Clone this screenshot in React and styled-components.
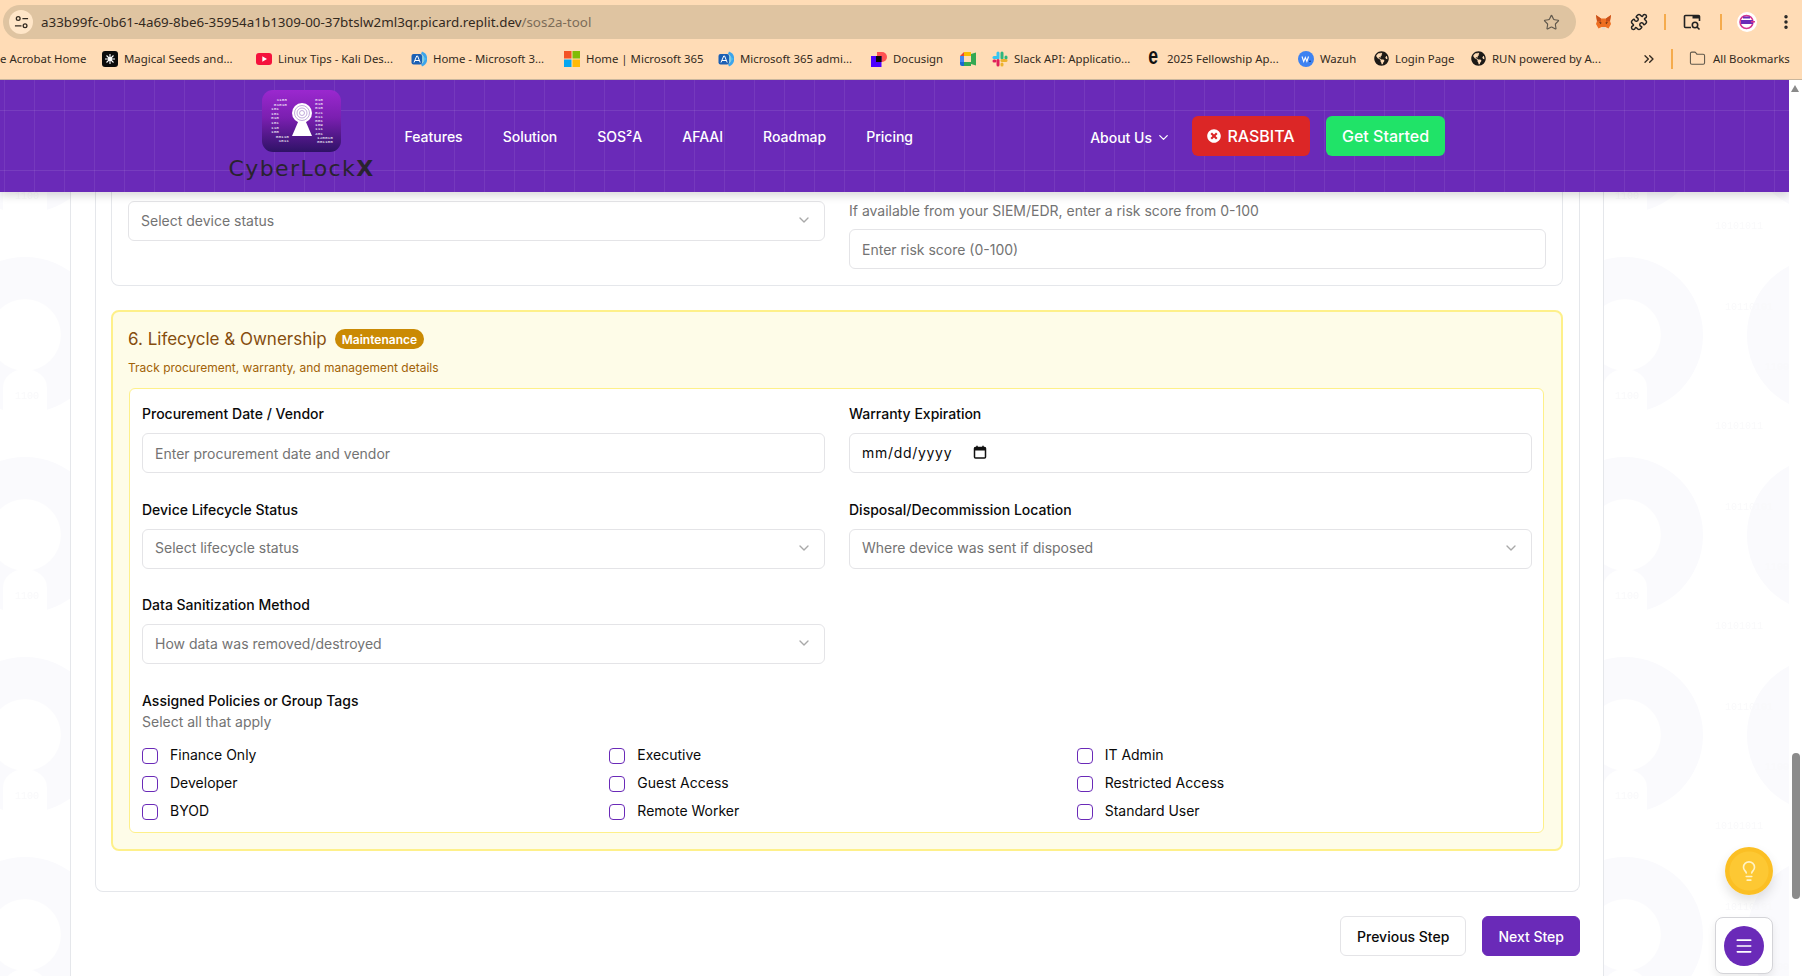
import React from 'react';
import styled, { createGlobalStyle } from 'styled-components';
import { ChevronDown, ChevronsRight, Folder, Lightbulb, Menu, MoreVertical, Puzzle, Star } from 'lucide-react';
import { FaGlobeAmericas, FaTimesCircle } from 'react-icons/fa';

const purple = '#6a2ab8';

const Global = createGlobalStyle`
  * { box-sizing: border-box; }
  html, body { margin: 0; padding: 0; height: 976px; overflow: hidden; background: #fff; }
  body { font-family: Inter, "Liberation Sans", sans-serif; color: #0a0a0a; }
`;

const Shell = styled.div`display: flex; flex-direction: column; width: 1802px; height: 976px; overflow: hidden;`;

/* browser chrome */
const Chrome = styled.div`
  height: 80px; flex: none; background: #ffdcb6; border-bottom: 1px solid #c9b69d;
  font-family: "Noto Sans", "Liberation Sans", sans-serif; color: #332a20;
`;
const Toolbar = styled.div`display: flex; align-items: flex-start; height: 41px; padding: 5px 0 0 3px;`;
const AddressBar = styled.div`
  display: flex; align-items: center; width: 1573px; height: 34px; border-radius: 17px; background: #dfc4a1; padding: 0 16px 0 6px;
`;
const SiteChip = styled.span`
  display: flex; align-items: center; justify-content: center; width: 24px; height: 24px; border-radius: 50%; background: #ffe6c8; margin-right: 8px; flex: none;
`;
const Url = styled.span`font-size: 13.4px; letter-spacing: 0; flex: 1; white-space: nowrap; color: #33291e;`;
const UrlPath = styled.span`color: #7c6c58;`;
const ToolIcons = styled.div`display: flex; align-items: center; height: 34px; margin-left: 17px;`;
const ToolSlot = styled.span`display: flex; align-items: center; justify-content: center; width: ${p => p.$w}px; height: 24px;`;
const ToolSep = styled.span`display: block; width: 2px; height: 16px; background: #f5ab4d;`;
const BookmarkBar = styled.div`display: flex; align-items: center; height: 35px; font-size: 11.4px; white-space: nowrap; overflow: hidden; position: relative;`;
const BookmarkItem = styled.span`
  display: flex; align-items: center; gap: 6px; flex: none; width: ${p => p.$w}px; color: #332a20;
`;
const AllBookmarks = styled(BookmarkItem)`margin-left: 7px;`;
const IconBox = styled.span`display: flex; width: 16px; height: 16px; align-items: center; justify-content: center; flex: none;`;
const ELetter = styled.span`font: 700 22px "Liberation Sans", sans-serif; color: #111; line-height: 16px; transform: scale(.8, 1.05); margin-top: -3px;`;
const LeadCut = styled.span`flex: none; width: 102px; margin-left: 0; color: #332a20;`;
const OverflowBtn = styled.span`display: flex; width: 22px; justify-content: center; margin-left: 31px; flex: none;`;
const BarSep = styled.span`display: block; width: 2px; height: 20px; background: #f5ab4d; margin: 0 16px 0 11px; flex: none;`;

/* viewport */
const Viewport = styled.div`display: flex; flex: 1; min-height: 0;`;
const Page = styled.div`flex: 1; position: relative; overflow: hidden; display: flex; flex-direction: column; background: #fff;`;
const Pattern = styled.svg`position: absolute; inset: 0; width: 100%; height: 100%; z-index: 0;`;
const ScrollTrack = styled.div`width: 13px; flex: none; background: #fff; position: relative;`;
const ScrollUp = styled.span`
  position: absolute; top: 5px; left: 2px; width: 0; height: 0; border-left: 4.5px solid transparent; border-right: 4.5px solid transparent; border-bottom: 7px solid #8a8a8a;
`;
const ScrollThumb = styled.span`position: absolute; top: 673px; left: 3px; width: 8px; height: 146px; border-radius: 4px; background: #8b8b8b;`;

/* header */
const Header = styled.header`
  position: relative; z-index: 3; flex: none; height: 112px; display: flex; align-items: center; padding: 0 344px 0 230px;
  background-color: ${purple};
  background-image: linear-gradient(to right, rgba(255,255,255,.07) 1px, transparent 1px), linear-gradient(to bottom, rgba(255,255,255,.09) 1px, transparent 1px);
  background-size: 30px 60px; background-position: 4px 30px;
  box-shadow: 0 4px 8px rgba(0,0,0,.14);
  color: #fff;
`;
const Brand = styled.div`display: flex; flex-direction: column; align-items: center; width: 143px; flex: none; margin-top: -2px;`;
const BrandName = styled.div`
  font: 400 22px "DejaVu Sans", sans-serif; letter-spacing: 1.4px; color: #29232f; line-height: 22px; margin-top: 6px; white-space: nowrap;
`;
const BrandX = styled.b`font-weight: 700;`;
const Nav = styled.nav`display: flex; align-items: center; gap: 40px; margin-left: 31.5px; font-size: 14px; font-weight: 500;`;
const NavLink = styled.a`color: #fff; white-space: nowrap;`;
const HeaderRight = styled.div`display: flex; align-items: center; margin-left: auto;`;
const About = styled.span`display: flex; align-items: center; gap: 4px; font-size: 14px; font-weight: 500; margin-right: 21px; margin-top: 2px;`;
const CTA = styled.button`
  display: flex; align-items: center; justify-content: center; gap: 6px; height: 40px; width: ${p => p.$w}px; border: 0; border-radius: 6px;
  background: ${p => p.$bg}; color: #fff; font: 500 16px Inter, sans-serif; padding: 0;
`;
const CTAGap = styled.span`width: 16px;`;

/* content */
const Content = styled.div`flex: 1; position: relative; z-index: 1; padding: 0 185px 0 70px; min-height: 0;`;
const Column = styled.main`height: 100%; background: #fff; border-left: 1px solid #e5e7eb; border-right: 1px solid #e5e7eb; padding: 0 23px 0 24px;`;
const MainCard = styled.section`border: 1px solid #e5e7eb; border-top: 0; border-radius: 0 0 8px 8px; padding: 0 16px 40px 15px;`;
const DeviceCard = styled.div`
  display: grid; grid-template-columns: 1fr 1fr; gap: 24px; border: 1px solid #e5e7eb; border-top: 0; border-radius: 0 0 8px 8px; padding: 9px 16px 16px;
`;
const Help = styled.div`font-size: 14px; line-height: 20px; color: #737373; margin-bottom: 8px; white-space: nowrap;`;
const fieldCss = `
  display: flex; align-items: center; width: 100%; height: 40px; background: #fff; border: 1px solid #e4e4e7; border-radius: 6px;
  padding: 0 12px; font: 400 14px Inter, sans-serif;
`;
const Input = styled.input`
  ${fieldCss} color: #0a0a0a; outline: none;
  &::placeholder { color: #737373; opacity: 1; }
`;
const Select = styled.div`${fieldCss} padding-bottom: 2px; justify-content: space-between; color: #737373;`;
const Chevron = styled(ChevronDown)`opacity: .5; color: #555;`;
const DateField = styled.div`${fieldCss} padding-bottom: 2px; gap: 21px; color: #0a0a0a; letter-spacing: .7px;`;

const Lifecycle = styled.section`margin-top: 24px; border: 2px solid #fef08a; border-radius: 8px; background: #fefce8; padding: 13px 17px 16px 15px;`;
const SectionHead = styled.div`display: flex; align-items: center; gap: 8px; height: 28px;`;
const SectionTitle = styled.h3`margin: 0; font-size: 17px; line-height: 28px; font-weight: 400; color: #854d0e; white-space: nowrap;`;
const Badge = styled.span`
  display: inline-flex; align-items: center; height: 20px; padding: 0 7px; border-radius: 10px; background: #ca8a04; color: #fff; font-size: 12px; font-weight: 600;
`;
const SectionDesc = styled.p`margin: 7px 0 12px; font-size: 12px; line-height: 16px; color: #a16207;`;
const InnerCard = styled.div`background: #fff; border: 1px solid #fef08a; border-radius: 6px; margin-left: 1px; padding: 15px 11px 11px 12px;`;
const FieldGrid = styled.div`display: grid; grid-template-columns: 1fr 1fr; column-gap: 24px; row-gap: 26.5px;`;
const Label = styled.label`display: block; font-size: 14px; line-height: 20px; font-weight: 500; color: #0a0a0a; margin-bottom: 9px;`;
const TagsBlock = styled.div`margin-top: 27px;`;
const TagsLabel = styled(Label)`margin-bottom: 1px;`;
const TagsHelp = styled.div`font-size: 14px; line-height: 20px; color: #737373;`;
const TagGrid = styled.div`display: grid; grid-template-columns: repeat(3, 1fr); gap: 8px 12px; margin-top: 13px;`;
const Tag = styled.label`display: flex; align-items: center; gap: 12px; font-size: 14px; line-height: 20px; color: #0a0a0a;`;
const Box = styled.span`display: block; width: 16px; height: 16px; border: 1px solid ${purple}; border-radius: 4px; background: #fff; margin-top: 2px; flex: none;`;

const Actions = styled.div`display: flex; justify-content: flex-end; gap: 16px; margin-top: 24px;`;
const StepButton = styled.button`
  height: 40px; padding: 0 ${p => (p.$primary ? 15 : 16)}px; border-radius: 6px; font: 500 14px Inter, sans-serif; white-space: nowrap;
  border: 1px solid ${p => (p.$primary ? purple : '#e4e4e7')};
  background: ${p => (p.$primary ? purple : '#fff')};
  color: ${p => (p.$primary ? '#fff' : '#0a0a0a')};
`;
const TipFab = styled.button`
  position: absolute; z-index: 4; left: 1725px; top: 767px; width: 48px; height: 48px; border-radius: 50%; border: 0; padding: 0;
  display: flex; align-items: center; justify-content: center; color: #fff3c4;
  background: radial-gradient(circle, #fdc833 0 19px, #fbbf24 20px);
  box-shadow: 0 6px 12px rgba(0,0,0,.12);
`;
const MenuDock = styled.div`
  position: absolute; z-index: 4; left: 1715px; top: 837px; width: 58px; height: 57px; border-radius: 8px; border: 1px solid #d4d4d8; background: #fff;
  display: flex; align-items: center; justify-content: center; box-shadow: 0 4px 8px rgba(0,0,0,.08);
`;
const MenuRound = styled.span`display: flex; align-items: center; justify-content: center; width: 40px; height: 40px; border-radius: 50%; background: ${purple}; color: #fff;`;

const SiteIcon = () => (
  <svg width="15" height="15" viewBox="0 0 16 16" fill="none" stroke="#332a20" strokeWidth="1.4">
    <circle cx="4.5" cy="3.8" r="2" /><path d="M9 3.8h6M1 11.5h7" /><circle cx="11.8" cy="11.5" r="2" />
  </svg>
);
const Fox = () => (
  <svg width="17" height="17" viewBox="0 0 17 17">
    <path d="M1 1l5 3.5h5L16 1l-1 6 1 3-2.500 4.500L10.500 13h-4L3.500 14.500 1 10l1-3z" fill="#ee6f22" />
    <path d="M6.500 13h4l-.7 2.500H7.200z" fill="#e8d8c8" />
    <path d="M4 8l2.500.5-.6 1.700zM13 8l-2.500.5.6 1.700z" fill="#5b2c10" />
    <path d="M1 1l5 3.500L6 8 2 7zM16 1l-5 3.500L11 8l4-1z" fill="#c9501a" />
  </svg>
);
const TabSearch = () => (
  <svg width="18" height="18" viewBox="0 0 18 18" fill="none" stroke="#222" strokeWidth="1.6">
    <path d="M8 14.500H2.500a1 1 0 0 1-1-1v-10a1 1 0 0 1 1-1h13a1 1 0 0 1 1 1V8" />
    <path d="M2 3h14v2.500H9.500V3" fill="#222" stroke="none" />
    <circle cx="12" cy="12" r="2.700" /><path d="M14 14l2.500 2.500" />
  </svg>
);
const Avatar = () => (
  <svg width="20" height="20" viewBox="0 0 20 20">
    <circle cx="10" cy="10" r="10" fill="#fff" />
    <circle cx="9.500" cy="10" r="6.500" fill="none" stroke="#d6358f" strokeWidth="1.500" />
    <rect x="4" y="8" width="12" height="4" fill="#6a2ab8" />
    <rect x="6" y="4.500" width="7" height="2" fill="#6a2ab8" />
    <rect x="14" y="9" width="4" height="1.500" fill="#d6358f" />
  </svg>
);
const Magical = () => (
  <svg width="16" height="16" viewBox="0 0 16 16">
    <rect width="16" height="16" rx="3" fill="#0b0b0b" />
    <g stroke="#fff" strokeWidth="1.100"><path d="M8 3v10M3 8h10M4.500 4.500l7 7M11.500 4.500l-7 7" /></g>
    <circle cx="8" cy="8" r="2" fill="#fff" />
  </svg>
);
const YouTube = () => (
  <svg width="16" height="12" viewBox="0 0 16 12">
    <rect width="16" height="12" rx="3" fill="#f5123d" /><path d="M6.300 3.300L11 6l-4.700 2.700z" fill="#fff" />
  </svg>
);
const AzureAdmin = () => (
  <svg width="16" height="16" viewBox="0 0 16 16">
    <path d="M11 0.500a8 8 0 0 1 0 15l-1-2.500a5.500 5.500 0 0 0 0-10z" fill="#3ba5ec" />
    <path d="M10.500 3.500l5 4.500-5 4.500z" fill="#50c3f2" opacity=".7" />
    <rect x="0.500" y="3" width="10.500" height="10.500" rx="2" fill="#1a5fb4" />
    <path d="M3 11.500L5.700 5h.9l2.600 6.500M4 9.500h4.200" stroke="#fff" strokeWidth="1" fill="none" />
  </svg>
);
const Windows = () => (
  <svg width="16" height="16" viewBox="0 0 16 16">
    <rect width="7.500" height="7.500" fill="#f35325" /><rect x="8.500" width="7.500" height="7.500" fill="#81bc06" />
    <rect y="8.500" width="7.500" height="7.500" fill="#05a6f0" /><rect x="8.500" y="8.500" width="7.500" height="7.500" fill="#ffba08" />
  </svg>
);
const Docusign = () => (
  <svg width="16" height="16" viewBox="0 0 16 16">
    <path d="M6 1h5a5 5 0 0 1 0 10H6z" fill="#ff5252" />
    <rect y="5" width="10.500" height="11" fill="#4c00ff" /><rect x="5" y="5" width="5.500" height="6" fill="#0b0b0b" />
  </svg>
);
const Meet = () => (
  <svg width="16" height="14" viewBox="0 0 16 14">
    <path d="M4 0h7v4H4z" fill="#fbbc04" /><path d="M0 4L4 0v4z" fill="#ea4335" /><path d="M0 4h4v6H0z" fill="#4285f4" />
    <path d="M0 10h4v4H2a2 2 0 0 1-2-2z" fill="#1967d2" /><path d="M4 10h7v4H4z" fill="#34a853" />
    <path d="M11 2v10l5 1.500V.500z" fill="#34a853" /><path d="M4 4h7v6H4z" fill="#ffdcb6" />
  </svg>
);
const Slack = () => (
  <svg width="16" height="16" viewBox="0 0 16 16" strokeWidth="3" strokeLinecap="round">
    <path d="M6 2v5" stroke="#36c5f0" /><path d="M2 6.500h3" stroke="#36c5f0" />
    <path d="M14 6v1" stroke="#2eb67d" /><path d="M10 2v5" stroke="#2eb67d" />
    <path d="M10 14v-1" stroke="#ecb22e" /><path d="M10 9.500h4" stroke="#ecb22e" />
    <path d="M2 10h1" stroke="#e01e5a" /><path d="M6 9.500V14" stroke="#e01e5a" />
  </svg>
);
const Wazuh = () => (
  <svg width="16" height="16" viewBox="0 0 16 16">
    <circle cx="8" cy="8" r="8" fill="#3d82f1" />
    <path d="M4 5.500l1.700 5 1.600-4 1.600 4 1.600-5" fill="none" stroke="#fff" strokeWidth="1.100" />
    <circle cx="12" cy="10.200" r=".8" fill="#0b2a66" />
  </svg>
);
const CalendarGlyph = () => (
  <svg width="14" height="14" viewBox="0 0 14 14" fill="none">
    <rect x="1.500" y="2.500" width="11" height="10.500" rx="1" stroke="#111" strokeWidth="1.500" />
    <rect x="1.500" y="2.500" width="11" height="3" fill="#111" />
    <path d="M4 .8v2M10 .8v2" stroke="#111" strokeWidth="1.500" />
  </svg>
);

const leftBits = [['1103', 25], ['01010', 25], ['101', 17], ['101', 17], ['010', 17], ['101', 17], ['110', 17], ['100', 17], ['00110', 27], ['1011', 27]];
const rightBits = ['010', '010', '010', '021', '011', '001', '109', '111', '401', '120010', '001100'];

const LogoMark = () => (
  <svg width="79" height="62" viewBox="0 0 79 62">
    <defs>
      <linearGradient id="logoFill" x1="0" y1="0" x2="0" y2="1">
        <stop offset="0" stopColor="#9b28cf" /><stop offset=".45" stopColor="#7a1fb0" /><stop offset="1" stopColor="#2e1266" />
      </linearGradient>
    </defs>
    <rect width="79" height="62" rx="11" fill="url(#logoFill)" />
    <g fontFamily="Liberation Mono, monospace" fontSize="4.400" fill="#fff" textAnchor="end">
      {leftBits.map(([b, x], i) => <text key={i} x={x} y={11 + i * 4.6}>{b}</text>)}
    </g>
    <g fontFamily="Liberation Mono, monospace" fontSize="4.400" fill="#fff">
      {rightBits.map((b, i) => <text key={i} x={i > 8 ? 55 : 53} y={11 + i * 4.200}>{b}</text>)}
    </g>
    <circle cx="40" cy="23" r="10" fill="#fff" />
    <g fill="none" stroke="#a887cc" strokeWidth=".7">
      <circle cx="40" cy="23" r="7.500" /><circle cx="40" cy="23" r="5" /><circle cx="40" cy="23" r="2.500" />
    </g>
    <path d="M36.500 31h7L50 46H30z" fill="#fff" />
  </svg>
);

const Watermark = () => (
  <Pattern aria-hidden="true">
    <defs>
      <pattern id="lockTile" width="200" height="200" patternUnits="userSpaceOnUse">
        <g>
          {[[25, 55], [225, 55], [25, 255], [25, -145], [225, -145], [225, 255]].map(([x, y]) => (
            <g key={`${x}-${y}`}>
              <circle cx={x} cy={y} r="78" fill="#fafafd" />
              <circle cx={x} cy={y} r="36" fill="#fff" />
              <path d={`M${x - 22} ${y + 90}V${y + 52}a22 18 0 0 1 44 0V${y + 90}z`} fill="#fff" />
            </g>
          ))}
        </g>
        <g fontFamily="Liberation Mono, monospace" fontSize="10" fill="#f9f9fb">
          <text x="125" y="30">10110101</text>
          <text x="165" y="90">11001</text>
          <text x="15" y="119">1100</text>
          <text x="115" y="149">10101011</text>
        </g>
      </pattern>
    </defs>
    <rect width="100%" height="100%" fill="url(#lockTile)" />
  </Pattern>
);

const bookmarks = [
  { w: 154, icon: <Magical />, text: 'Magical Seeds and...' },
  { w: 155, icon: <YouTube />, text: 'Linux Tips - Kali Des...' },
  { w: 153, icon: <AzureAdmin />, text: 'Home - Microsoft 3...' },
  { w: 154, icon: <Windows />, text: 'Home | Microsoft 365' },
  { w: 153, icon: <AzureAdmin />, text: 'Microsoft 365 admi...' },
  { w: 89, icon: <Docusign />, text: 'Docusign' },
  { w: 32, icon: <Meet />, text: '' },
  { w: 153, icon: <Slack />, text: 'Slack API: Applicatio...' },
  { w: 153, icon: <ELetter>e</ELetter>, text: '2025 Fellowship Ap...' },
  { w: 75, icon: <Wazuh />, text: 'Wazuh' },
  { w: 97, icon: <FaGlobeAmericas size={15} color="#1d1a17" />, text: 'Login Page' },
  { w: 137, icon: <FaGlobeAmericas size={15} color="#1d1a17" />, text: 'RUN powered by A...' },
];

const navItems = ['Features', 'Solution', 'SOS²A', 'AFAAI', 'Roadmap', 'Pricing'];

const SelectField = ({ placeholder }) => (
  <Select>
    {placeholder}
    <Chevron size={16} />
  </Select>
);

const tags = ['Finance Only', 'Executive', 'IT Admin', 'Developer', 'Guest Access', 'Restricted Access', 'BYOD', 'Remote Worker', 'Standard User'];

export default function App() {
  return (
    <Shell>
      <Global />
      <Chrome>
        <Toolbar>
          <AddressBar>
            <SiteChip><SiteIcon /></SiteChip>
            <Url>a33b99fc-0b61-4a69-8be6-35954a1b1309-00-37btslw2ml3qr.picard.replit.dev<UrlPath>/sos2a-tool</UrlPath></Url>
            <Star size={17} color="#5f574b" strokeWidth={1.6} />
          </AddressBar>
          <ToolIcons>
            <ToolSlot $w={20}><Fox /></ToolSlot>
            <ToolSlot $w={16} />
            <ToolSlot $w={20}><Puzzle size={18} color="#222" strokeWidth={2} /></ToolSlot>
            <ToolSlot $w={15} />
            <ToolSep />
            <ToolSlot $w={16} />
            <ToolSlot $w={20}><TabSearch /></ToolSlot>
            <ToolSlot $w={18} />
            <ToolSep />
            <ToolSlot $w={14} />
            <ToolSlot $w={22}><Avatar /></ToolSlot>
            <ToolSlot $w={18} />
            <ToolSlot $w={20}><MoreVertical size={18} color="#222" strokeWidth={2.600} /></ToolSlot>
          </ToolIcons>
        </Toolbar>
        <BookmarkBar>
          <LeadCut>e Acrobat Home</LeadCut>
          {bookmarks.map((b, i) => (
            <BookmarkItem key={i} $w={b.w}>
              <IconBox>{b.icon}</IconBox>
              {b.text}
            </BookmarkItem>
          ))}
          <OverflowBtn><ChevronsRight size={16} color="#332a20" /></OverflowBtn>
          <BarSep />
          <Folder size={17} color="#5f574b" strokeWidth={1.500} />
          <AllBookmarks $w={84}>All Bookmarks</AllBookmarks>
        </BookmarkBar>
      </Chrome>

      <Viewport>
        <Page>
          <Watermark />
          <Header>
            <Brand>
              <LogoMark />
              <BrandName>CyberLock<BrandX>X</BrandX></BrandName>
            </Brand>
            <Nav>
              {navItems.map(n => (
                <NavLink key={n}>{n}</NavLink>
              ))}
            </Nav>
            <HeaderRight>
              <About>About Us <ChevronDown size={15} /></About>
              <CTA $w={118} $bg="#dc2626"><FaTimesCircle size={14} />RASBITA</CTA>
              <CTAGap />
              <CTA $w={119} $bg="#20e368">Get Started</CTA>
            </HeaderRight>
          </Header>

          <Content>
            <Column>
              <MainCard>
                <DeviceCard>
                  <div><SelectField placeholder="Select device status" /></div>
                  <div>
                    <Help>If available from your SIEM/EDR, enter a risk score from 0-100</Help>
                    <Input placeholder="Enter risk score (0-100)" />
                  </div>
                </DeviceCard>

                <Lifecycle>
                  <SectionHead>
                    <SectionTitle>6. Lifecycle &amp; Ownership</SectionTitle>
                    <Badge>Maintenance</Badge>
                  </SectionHead>
                  <SectionDesc>Track procurement, warranty, and management details</SectionDesc>
                  <InnerCard>
                    <FieldGrid>
                      <div>
                        <Label>Procurement Date / Vendor</Label>
                        <Input placeholder="Enter procurement date and vendor" />
                      </div>
                      <div>
                        <Label>Warranty Expiration</Label>
                        <DateField>mm/dd/yyyy <CalendarGlyph /></DateField>
                      </div>
                      <div>
                        <Label>Device Lifecycle Status</Label>
                        <SelectField placeholder="Select lifecycle status" />
                      </div>
                      <div>
                        <Label>Disposal/Decommission Location</Label>
                        <SelectField placeholder="Where device was sent if disposed" />
                      </div>
                      <div>
                        <Label>Data Sanitization Method</Label>
                        <SelectField placeholder="How data was removed/destroyed" />
                      </div>
                    </FieldGrid>
                    <TagsBlock>
                      <TagsLabel>Assigned Policies or Group Tags</TagsLabel>
                      <TagsHelp>Select all that apply</TagsHelp>
                      <TagGrid>
                        {tags.map(t => (
                          <Tag key={t}><Box />{t}</Tag>
                        ))}
                      </TagGrid>
                    </TagsBlock>
                  </InnerCard>
                </Lifecycle>
              </MainCard>
              <Actions>
                <StepButton>Previous Step</StepButton>
                <StepButton $primary>Next Step</StepButton>
              </Actions>
            </Column>
          </Content>

          <TipFab aria-label="Tips"><Lightbulb size={22} strokeWidth={1.800} /></TipFab>
          <MenuDock><MenuRound><Menu size={20} /></MenuRound></MenuDock>
        </Page>
        <ScrollTrack>
          <ScrollUp />
          <ScrollThumb />
        </ScrollTrack>
      </Viewport>
    </Shell>
  );
}
